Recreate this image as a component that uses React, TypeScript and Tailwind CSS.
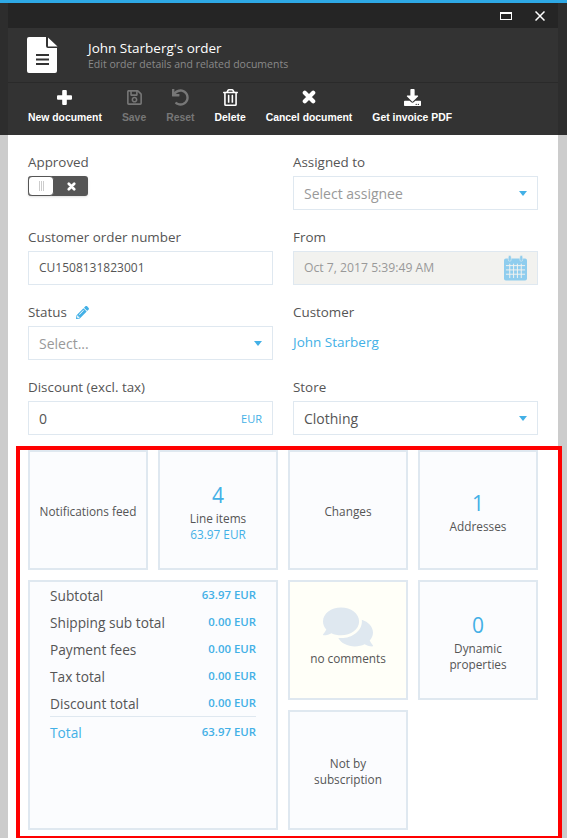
import React from 'react';
import { FaComments, FaDownload, FaPencilAlt, FaRegSave, FaRegTrashAlt, FaUndo } from 'react-icons/fa';

const sans = "font-['Open_Sans',sans-serif]";

function ThickPlus({ size = 15 }: { size?: number }) {
  return (
    <svg width={size} height={size} viewBox="0 0 15 15" fill="currentColor">
      <path d="M5.2 1a1 1 0 0 1 1-1h2.6a1 1 0 0 1 1 1v4.2H14a1 1 0 0 1 1 1v2.6a1 1 0 0 1-1 1H9.800v4.200a1 1 0 0 1-1 1H6.200a1 1 0 0 1-1-1V9.800H1a1 1 0 0 1-1-1V6.200a1 1 0 0 1 1-1h4.200z" />
    </svg>
  );
}

function ThickX({ size = 14 }: { size?: number }) {
  return (
    <svg width={size} height={size} viewBox="0 0 14 14" stroke="currentColor" strokeWidth="4.2" strokeLinecap="round">
      <path d="M2.800 2.800l8.400 8.400M11.200 2.800l-8.400 8.400" />
    </svg>
  );
}

function DocIcon() {
  return (
    <svg width="31" height="36" viewBox="0 0 31 36" fill="white">
      <path d="M2 0h17v9a2 2 0 0 0 2 2h9v23a2 2 0 0 1-2 2H2a2 2 0 0 1-2-2V2a2 2 0 0 1 2-2z" />
      <path d="M21 0.500l9.500 9H21z" />
      <path d="M9 17h13v2H9zM9 21.500h13v2H9zM9 26h13v2H9z" fill="#333333" />
    </svg>
  );
}

function CalendarIcon() {
  return (
    <svg width="23" height="26" viewBox="0 0 24 26">
      <path d="M2 3h20a2 2 0 0 1 2 2v19a2 2 0 0 1-2 2H2a2 2 0 0 1-2-2V5a2 2 0 0 1 2-2z" fill="#8fcdee" />
      <rect x="4.500" y="0" width="3" height="6" rx="1.500" fill="#8fcdee" stroke="#f2f2ef" strokeWidth="0.500" />
      <rect x="16.500" y="0" width="3" height="6" rx="1.500" fill="#8fcdee" stroke="#f2f2ef" strokeWidth="0.500" />
      <path d="M2 10.500h20M2 15h20M2 19.500h20M6 8.500v15M10 8.500v15M14 8.500v15M18 8.500v15" stroke="#f2f2ef" strokeWidth="1" fill="none" />
    </svg>
  );
}

function ToolButton({ icon, label, disabled }: { icon: React.ReactNode; label: string; disabled?: boolean }) {
  return (
    <div className={`flex flex-col items-center ${disabled ? 'text-[#777]' : 'text-white'}`}>
      <div className="h-[20px] flex items-center justify-center text-[17px]">{icon}</div>
      <span className="mt-[4px] font-['Liberation_Sans',sans-serif] font-bold text-[10.4px] leading-[14px]">{label}</span>
    </div>
  );
}

function Caret() {
  return <span className="w-0 h-0 border-x-[4px] border-x-transparent border-t-[5px] border-t-[#43b0e6]" />;
}

function Field({ label, children, extra }: { label: string; children: React.ReactNode; extra?: React.ReactNode }) {
  return (
    <div className="h-[75px]">
      <div className="h-[20px] flex items-center gap-[9px] text-[13.4px] text-[#555] mb-[4px]">
        {label}
        {extra}
      </div>
      {children}
    </div>
  );
}

function Box({ children, muted }: { children: React.ReactNode; muted?: boolean }) {
  return (
    <div className={`h-[34px] border border-[#dfe8f0] flex items-center justify-between pl-[10px] pr-[10px] text-[14px] ${muted ? 'bg-[#f2f2ef]' : 'bg-white'}`}>
      {children}
    </div>
  );
}

function Tile({ children, className }: { children: React.ReactNode; className?: string }) {
  return (
    <div className={`h-[120px] border-2 border-[#dfe8f0] flex flex-col items-center justify-center pt-[2px] text-center text-[11.8px] leading-[16px] text-[#555] ${className ?? 'bg-[#fbfcfe]'}`}>
      {children}
    </div>
  );
}

function Count({ value }: { value: string }) {
  return <span className="text-[21px] leading-[24px] text-[#43b0e6] mt-[2px] mb-[3px]">{value}</span>;
}

function Total({ label, value, blue }: { label: string; value: string; blue?: boolean }) {
  return (
    <div className="h-[27px] flex justify-between">
      <span className={`text-[13.7px] leading-[24px] ${blue ? 'text-[#43b0e6]' : 'text-[#555]'}`}>{label}</span>
      <span className="text-[11.4px] leading-[22px] font-semibold text-[#43b0e6]">{value}</span>
    </div>
  );
}

export default function App() {
  return (
    <div className={`relative h-[838px] w-[567px] overflow-hidden bg-[#cccccc] ${sans}`}>
      <div className="h-[3px] bg-[#2ea9e6]" />
      <div className="h-[132px] bg-[#2d2d2d] pl-[8px]">
        <div className="w-[550px] h-[25px] bg-[#252525] flex items-center justify-end gap-[23px] pr-[13px]">
          <span className="w-[12px] h-[8px] border border-white border-t-[2px]" />
          <svg width="10" height="10" viewBox="0 0 10 10" stroke="white" strokeWidth="1.500">
            <path d="M0.500 0.500l9 9M9.500 0.500l-9 9" />
          </svg>
        </div>
        <div className="w-[550px] h-[107px] bg-[#333333]">
          <div className="h-[55px] flex items-center border-b border-[#2a2a2a] pl-[19px]">
            <DocIcon />
            <div className="ml-[30px]">
              <div className="text-white text-[13.5px] leading-[18px]">John Starberg's order</div>
              <div className="text-[#8a8a8a] text-[10.5px] leading-[15px]">Edit order details and related documents</div>
            </div>
          </div>
          <div className="flex gap-[20px] pl-[20px] pt-[4px]">
            <ToolButton icon={<ThickPlus />} label="New document" />
            <ToolButton icon={<FaRegSave />} label="Save" disabled />
            <ToolButton icon={<FaUndo />} label="Reset" disabled />
            <ToolButton icon={<FaRegTrashAlt />} label="Delete" />
            <ToolButton icon={<ThickX />} label="Cancel document" />
            <ToolButton icon={<FaDownload />} label="Get invoice PDF" />
          </div>
        </div>
      </div>

      <div className="ml-[8px] w-[550px] h-[703px] bg-white px-[20px] pt-[17px]">
        <div className="grid grid-cols-2 gap-x-[20px]">
          <Field label="Approved">
            <div className="w-[60px] h-[20px] rounded-[3px] bg-[#555] flex items-center shadow-sm">
              <div className="w-[26px] h-[20px] rounded-[4px] bg-white border border-[#555] flex items-center justify-center gap-[1px]">
                <span className="w-px h-[10px] bg-[#ccc]" />
                <span className="w-px h-[10px] bg-[#ccc]" />
                <span className="w-px h-[10px] bg-[#ccc]" />
              </div>
              <div className="flex-1 flex justify-center text-white"><ThickX size={9} /></div>
            </div>
          </Field>
          <Field label="Assigned to">
            <Box>
              <span className="text-[#999]">Select assignee</span>
              <Caret />
            </Box>
          </Field>
          <Field label="Customer order number">
            <Box><span className="text-[#555] text-[12px]">CU1508131823001</span></Box>
          </Field>
          <Field label="From">
            <Box muted>
              <span className="text-[#999] text-[12.2px]">Oct 7, 2017 5:39:49 AM</span>
              <CalendarIcon />
            </Box>
          </Field>
          <Field label="Status" extra={<FaPencilAlt className="text-[#43b0e6] text-[13px]" />}>
            <Box>
              <span className="text-[#999]">Select...</span>
              <Caret />
            </Box>
          </Field>
          <Field label="Customer">
            <div className="text-[13.5px] leading-[34px] -mt-[1px] text-[#43b0e6]">John Starberg</div>
          </Field>
          <Field label="Discount (excl. tax)">
            <Box>
              <span className="text-[#555]">0</span>
              <span className="text-[#43b0e6] text-[11px] font-medium mt-[2px]">EUR</span>
            </Box>
          </Field>
          <Field label="Store">
            <Box>
              <span className="text-[#555]">Clothing</span>
              <Caret />
            </Box>
          </Field>
        </div>

        <div className="grid grid-cols-4 gap-[10px] -mt-[2px]">
          <Tile>Notifications feed</Tile>
          <Tile>
            <Count value="4" />
            <span>Line items</span>
            <span className="text-[#43b0e6]">63.97 EUR</span>
          </Tile>
          <Tile>Changes</Tile>
          <Tile>
            <Count value="1" />
            <span>Addresses</span>
          </Tile>

          <div className="col-span-2 row-span-2 border-2 border-[#dfe8f0] bg-[#fbfcfe] pl-[20px] pr-[20px] pt-[2px]">
            <Total label="Subtotal" value="63.97 EUR" />
            <Total label="Shipping sub total" value="0.00 EUR" />
            <Total label="Payment fees" value="0.00 EUR" />
            <Total label="Tax total" value="0.00 EUR" />
            <Total label="Discount total" value="0.00 EUR" />
            <div className="border-t border-[#dfe8f0] pt-[4px] -mt-[3px]">
              <Total label="Total" value="63.97 EUR" blue />
            </div>
          </div>
          <Tile className="bg-[#fffff8] pb-[14px]">
            <FaComments className="text-[#dfe8f0] text-[50px] -mb-[2px]" />
            <span>no comments</span>
          </Tile>
          <Tile>
            <Count value="0" />
            <span>Dynamic</span>
            <span>properties</span>
          </Tile>
          <Tile>
            <span>Not by</span>
            <span>subscription</span>
          </Tile>
        </div>
      </div>

      {/* red annotation frame */}
      <div className="absolute left-[16px] top-[446px] w-[546px] h-[392px] border-4 border-b-2 border-[#ff0000] pointer-events-none" />
    </div>
  );
}
